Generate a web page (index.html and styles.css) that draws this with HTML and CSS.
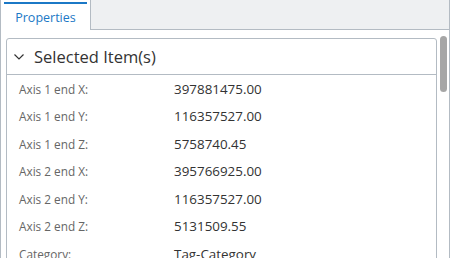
FILE: index.html
```html
<!DOCTYPE html>
<html lang="en">
<head>
    <meta charset="UTF-8">
    <title>Properties</title>
    <link rel="stylesheet" href="styles.css">
</head>
<body>
    <div class="panel">
        <div class="tabstrip">
            <div class="tab active">Properties</div>
            <div class="tab-fill"></div>
        </div>
        <div class="content">
            <div class="card">
                <div class="card-header">
                    <svg class="chevron" width="10" height="6" viewBox="0 0 10 6">
                        <path d="M0.5 0.5 L5 5 L9.5 0.5" fill="none" stroke="#333" stroke-width="1.2"/>
                    </svg>
                    <span>Selected Item(s)</span>
                </div>
                <div class="rows">
                    <div class="row"><span class="label">Axis 1 end X:</span><span class="value">397881475.00</span></div>
                    <div class="row"><span class="label">Axis 1 end Y:</span><span class="value">116357527.00</span></div>
                    <div class="row"><span class="label">Axis 1 end Z:</span><span class="value">5758740.45</span></div>
                    <div class="row"><span class="label">Axis 2 end X:</span><span class="value">395766925.00</span></div>
                    <div class="row"><span class="label">Axis 2 end Y:</span><span class="value">116357527.00</span></div>
                    <div class="row"><span class="label">Axis 2 end Z:</span><span class="value">5131509.55</span></div>
                    <div class="row"><span class="label">Category:</span><span class="value">Tag-Category</span></div>
                </div>
            </div>
            <div class="scrollbar">
                <div class="thumb"></div>
            </div>
        </div>
    </div>
</body>
</html>
```

FILE: styles.css
```css
body {
    margin: 0;
    font-family: "Open Sans", sans-serif;
    background: #ffffff;
}
.panel {
    width: 450px;
    height: 258px;
    box-sizing: border-box;
    border-left: 1px solid #b3bbc3;
    border-right: 1px solid #b3bbc3;
    overflow: hidden;
}
.tabstrip {
    display: flex;
    height: 30px;
}
.tab {
    width: 89px;
    box-sizing: border-box;
    padding: 2px 3px 0;
    font-size: 12.5px;
    color: #1b78c6;
    background: #fff;
}
.tab.active::before {
    content: "";
    display: block;
    height: 2px;
    background: #1b78c6;
    margin-bottom: 5px;
}
.tab.active {
    text-align: center;
    line-height: 17px;
}
.tab-fill {
    flex: 1;
    background: #eef0f2;
    border-left: 1px solid #b3bbc3;
    border-bottom: 1px solid #b3bbc3;
}
.content {
    display: flex;
    height: 228px;
    overflow: hidden;
}
.card {
    flex: 1;
    margin: 8px 0 0 5px;
    border: 1px solid #b3bbc3;
    border-radius: 3px;
    align-self: flex-start;
}
.card-header {
    display: flex;
    align-items: center;
    height: 35px;
    border-bottom: 1px solid #b3bbc3;
    font-size: 16.5px;
    color: #333;
}
.chevron {
    margin: 1px 10px 0 7px;
}
.row {
    display: flex;
    align-items: center;
    height: 27.5px;
    padding-left: 12px;
}
.label {
    width: 155px;
    font-size: 11.8px;
    color: #666;
}
.value {
    font-size: 13.4px;
    color: #333;
}
.scrollbar {
    width: 12px;
    padding: 6px 2px 0 3px;
    box-sizing: border-box;
}
.thumb {
    height: 56px;
    background: #a6a6a6;
    border-radius: 4px;
}
```
